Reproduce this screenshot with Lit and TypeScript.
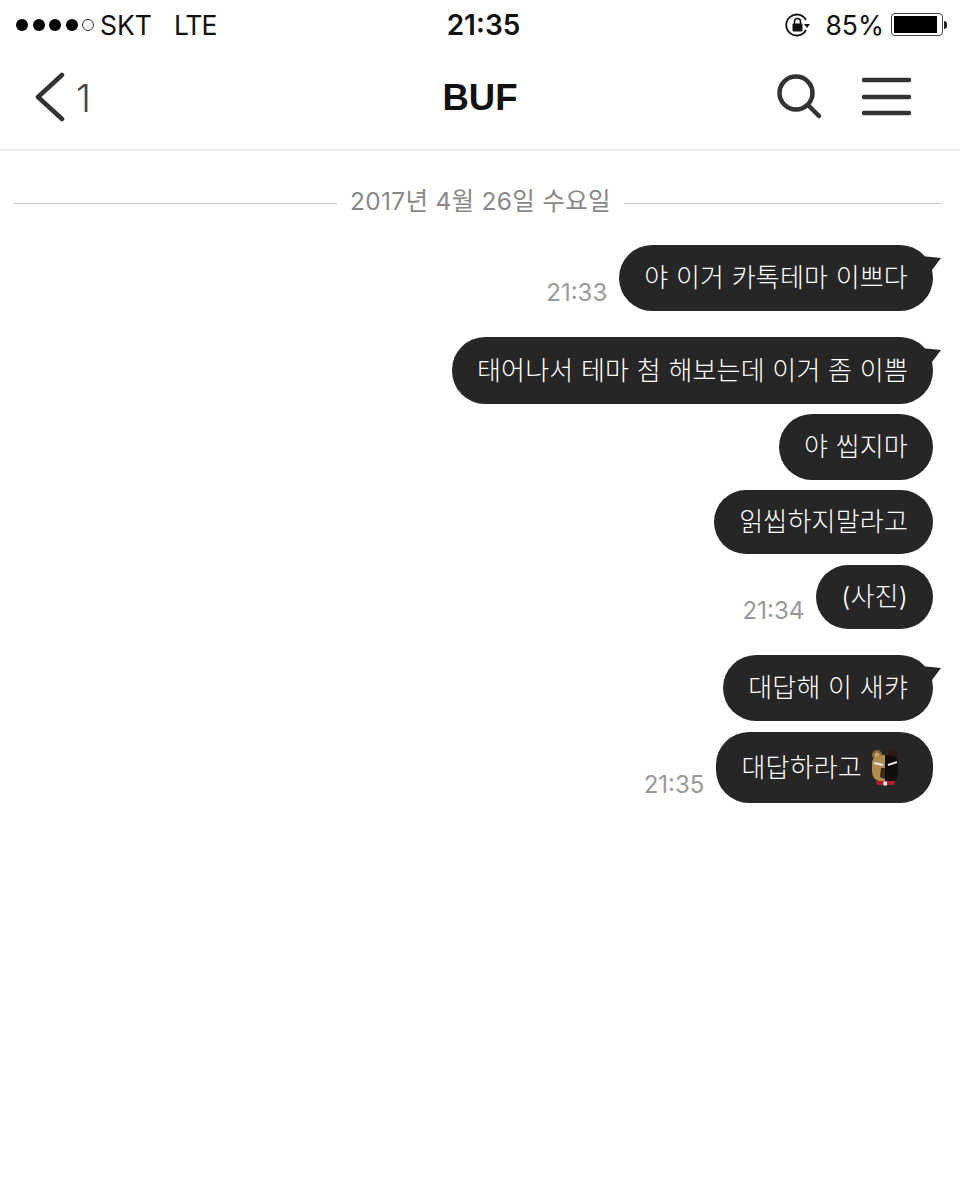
import { LitElement, css, html, nothing, svg } from 'lit';
import { customElement } from 'lit/decorators.js';

interface Message {
  text: string;
  height: number;
  gap: number;
  time?: string;
  tail?: boolean;
  sticker?: boolean;
}

const MESSAGES: Message[] = [
  { text: '야 이거 카톡테마 이쁘다', height: 66, gap: 0, time: '21:33', tail: true },
  { text: '태어나서 테마 첨 해보는데 이거 좀 이쁨', height: 67, gap: 26, tail: true },
  { text: '야 씹지마', height: 66, gap: 10 },
  { text: '읽씹하지말라고', height: 64, gap: 10 },
  { text: '(사진)', height: 64, gap: 11, time: '21:34' },
  { text: '대답해 이 새캬', height: 66, gap: 26, tail: true },
  { text: '대답하라고', height: 71, gap: 11, time: '21:35', sticker: true },
];

const bear = svg`
  <svg class="sticker" viewBox="0 0 28 38" width="28" height="38" aria-hidden="true">
    <circle cx="6" cy="6" r="5" fill="#8a6a3a" />
    <circle cx="22" cy="5" r="5" fill="#2a1d14" />
    <circle cx="6" cy="6" r="2.500" fill="#c9a468" />
    <path d="M1 13 Q2 6 14 6 L14 32 L8 32 Q1 30 1 22 Z" fill="#b08a4e" />
    <path d="M14 6 Q27 6 27 13 L27 24 Q27 31 21 32 L14 32 Z" fill="#100d0c" />
    <path d="M3 14 L12 16 M17 16 L26 13" stroke="#e8e8e8" stroke-width="2" />
    <path d="M10 19 L14 19 L14 30 L9 28 Z" fill="#3a2a18" />
    <path d="M5 32 L24 32 L23 36 L6 36 Z" fill="#b3202a" />
    <rect x="12.500" y="32.500" width="3.500" height="4" fill="#eee" />
  </svg>
`;

@customElement('app-root')
export class AppRoot extends LitElement {
  render() {
    return html`
      <div class="status">
        <div class="status-left">
          <span class="signal">
            <i></i><i></i><i></i><i></i><i class="off"></i>
          </span>
          <span>SKT</span>
          <span class="lte">LTE</span>
        </div>
        <div class="clock">21:35</div>
        <div class="status-right">
          <svg class="lock" viewBox="0 0 26 24" width="26" height="24" aria-hidden="true">
            <path d="M21 17 A10.500 10.500 0 1 1 21 7" fill="none" stroke="#111" stroke-width="1.800" />
            <path d="M19 11 L25 11 L22 15 Z" fill="#111" />
            <rect x="7.500" y="10.500" width="10" height="8" rx="1" fill="#111" />
            <path d="M9.500 11 V8.500 A3 3 0 0 1 15.500 8.500 V11" fill="none" stroke="#111" stroke-width="1.600" />
          </svg>
          <span class="percent">85%</span>
          <span class="battery"><span class="level"></span></span>
          <span class="nub"></span>
        </div>
      </div>

      <header class="nav">
        <div class="back">
          <svg viewBox="0 0 34 52" width="34" height="52" aria-hidden="true">
            <path d="M28 3 L4 25 L28 47" fill="none" stroke="#333" stroke-width="4.500" stroke-linecap="round" stroke-linejoin="round" />
          </svg>
          <span class="count">1</span>
        </div>
        <h1>BUF</h1>
        <div class="actions">
          <svg viewBox="0 0 48 48" width="48" height="48" aria-hidden="true">
            <circle cx="21" cy="20" r="16.500" fill="none" stroke="#333" stroke-width="4.500" />
            <path d="M33 32 L44 43" stroke="#333" stroke-width="4.500" stroke-linecap="round" />
          </svg>
          <svg viewBox="0 0 50 40" width="50" height="40" aria-hidden="true">
            <path d="M2 3 H47 M2 20 H47 M2 36 H47" stroke="#333" stroke-width="4.500" stroke-linecap="round" />
          </svg>
        </div>
      </header>

      <div class="date">
        <span class="rule"></span>
        <span class="date-text">2017년 4월 26일 수요일</span>
        <span class="rule"></span>
      </div>

      <section class="messages">
        ${MESSAGES.map(
          (m) => html`
            <div class="row" style="margin-top:${m.gap}px">
              ${m.time ? html`<span class="time">${m.time}</span>` : nothing}
              <div class="bubble ${m.tail ? 'tail' : ''}" style="height:${m.height}px">
                <span>${m.text}</span>
                ${m.sticker ? bear : nothing}
              </div>
            </div>
          `,
        )}
      </section>
    `;
  }

  static styles = css`
    :host {
      display: block;
      min-height: 1200px;
      background: #fff;
      color: #111;
      font-family: 'Inter', 'Noto Sans CJK KR', sans-serif;
    }

    .status {
      display: grid;
      grid-template-columns: 1fr auto 1fr;
      align-items: center;
      height: 49px;
      padding: 0 13px 0 16px;
      font-size: 26.500px;
    }

    .status-left {
      display: flex;
      align-items: center;
    }

    .signal {
      display: flex;
      gap: 4.500px;
      margin-right: 6px;
    }

    .signal i {
      width: 12px;
      height: 12px;
      border-radius: 50%;
      background: #000;
      box-sizing: border-box;
    }

    .signal i.off {
      background: none;
      border: 1px solid #333;
    }

    .lte {
      margin-left: 22px;
      letter-spacing: -1px;
    }

    .clock {
      margin-left: 4px;
      font-size: 28px;
      font-weight: 600;
    }

    .status-right {
      display: flex;
      align-items: center;
      justify-content: flex-end;
    }

    .percent {
      margin: 0 7px 0 14px;
    }

    .battery {
      display: block;
      width: 52px;
      height: 23px;
      padding: 2px;
      border: 1px solid #444;
      border-radius: 4px;
      box-sizing: border-box;
    }

    .level {
      display: block;
      width: 43px;
      height: 100%;
      background: #000;
    }

    .nub {
      width: 3px;
      height: 8px;
      margin-left: 1px;
      border-radius: 0 3px 3px 0;
      background: #222;
    }

    .nav {
      display: grid;
      grid-template-columns: 1fr auto 1fr;
      align-items: center;
      height: 102px;
      padding: 0 48px 2px;
      border-bottom: 2px solid #eee;
      box-sizing: border-box;
    }

    .back {
      display: flex;
      align-items: center;
      gap: 8px;
      margin-left: -14px;
    }

    .count {
      color: #444;
      font-size: 38px;
      font-weight: 300;
    }

    h1 {
      margin: 0;
      font-family: 'Liberation Sans', sans-serif;
      font-size: 36.500px;
      font-weight: 700;
    }

    .actions {
      display: flex;
      align-items: center;
      justify-content: flex-end;
      gap: 39px;
      margin-top: -2px;
    }

    .date {
      display: grid;
      grid-template-columns: 323px auto 1fr;
      align-items: center;
      gap: 13px;
      height: 46px;
      margin-top: 25px;
      padding: 0 19px 0 14px;
    }

    .rule {
      height: 1px;
      margin-top: 9px;
      background: #c4c4c4;
    }

    .date-text {
      color: #888;
      font-size: 24.500px;
      letter-spacing: 0.3px;
    }

    .messages {
      display: flex;
      flex-direction: column;
      margin-top: 23px;
      padding-right: 27px;
    }

    .row {
      display: flex;
      align-items: flex-end;
      justify-content: flex-end;
      gap: 12px;
    }

    .time {
      margin-bottom: 4px;
      color: #999;
      font-size: 24px;
    }

    .bubble {
      position: relative;
      display: flex;
      align-items: center;
      gap: 9px;
      padding: 0 25px 5px;
      box-sizing: border-box;
      border-radius: 33px;
      background: #262626;
      color: #fff;
      font-size: 26px;
      font-weight: 300;
      letter-spacing: 0.2px;
      white-space: nowrap;
    }

    .tail::after {
      content: '';
      position: absolute;
      top: 11px;
      right: -8px;
      width: 20px;
      height: 14px;
      background: #262626;
      clip-path: polygon(0 0, 100% 14%, 55% 100%, 0 100%);
    }

    .sticker {
      margin-right: 9px;
      margin-top: 5px;
    }
  `;
}

declare global {
  interface HTMLElementTagNameMap {
    'app-root': AppRoot;
  }
}
